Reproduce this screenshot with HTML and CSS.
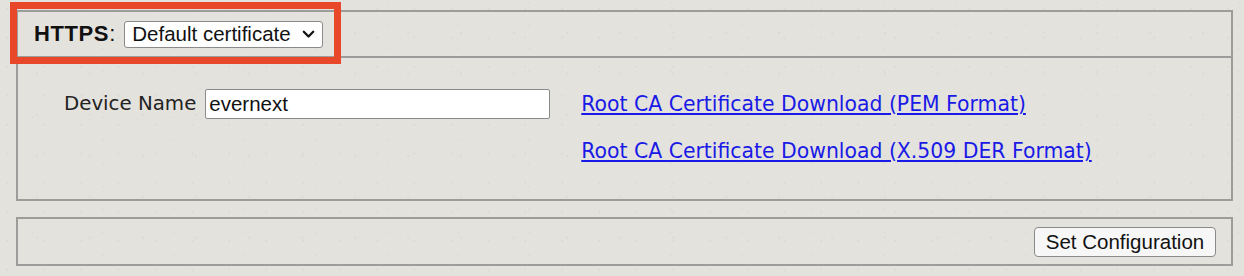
FILE: index.html
```html
<!DOCTYPE html>
<html>
<head>
<meta charset="utf-8">
<link rel="stylesheet" href="styles.css">
</head>
<body>
<div class="page">
  <div class="panel">
    <div class="panel-head">
      <span class="head-label">HTTPS</span><span class="colon">:</span>
      <span class="select">Default certificate<svg class="chev" width="13" height="9" viewBox="0 0 13 9"><path d="M1.8 1.8 L6.5 6.5 L11.2 1.8" fill="none" stroke="#111" stroke-width="2.3" stroke-linecap="round" stroke-linejoin="round"/></svg></span>
      <div class="annot"></div>
    </div>
    <div class="panel-body">
      <div class="row">
        <span class="label">Device Name</span>
        <span class="input">evernext</span>
        <div class="links">
          <a href="#" class="link">Root CA Certificate Download (PEM Format)</a>
          <a href="#" class="link">Root CA Certificate Download (X.509 DER Format)</a>
        </div>
      </div>
    </div>
  </div>
  <div class="panel actions">
    <button class="btn">Set Configuration</button>
  </div>
</div>
</body>
</html>
```
FILE: styles.css
```css
html, body {
  margin: 0;
  padding: 0;
}
body {
  background-color: #e4e2dd;
  background-image:
    radial-gradient(circle at 20% 30%, rgba(150,150,145,0.16) 0.6px, transparent 1.2px),
    radial-gradient(circle at 70% 80%, rgba(150,150,145,0.13) 0.6px, transparent 1.2px),
    radial-gradient(circle at 45% 10%, rgba(150,150,145,0.12) 0.5px, transparent 1px);
  background-size: 37px 29px, 53px 41px, 71px 23px;
  width: 1244px;
  height: 276px;
  overflow: hidden;
}
.page {
  padding: 10px 11px 0 16px;
  display: flex;
  flex-direction: column;
  gap: 16px;
}
.panel {
  border: 2px solid #9c9c9a;
}
.panel-head {
  position: relative;
  height: 44px;
  border-bottom: 2px solid #9c9c9a;
  display: flex;
  align-items: center;
  padding-left: 16px;
  font-family: "Liberation Sans", Arial, sans-serif;
}
.head-label {
  font-weight: bold;
  font-size: 22px;
  letter-spacing: 0.6px;
  color: #111;
}
.colon {
  font-size: 22px;
  color: #111;
  margin-right: 9px;
}
.select {
  display: flex;
  align-items: center;
  justify-content: space-between;
  box-sizing: border-box;
  width: 199px;
  height: 27px;
  padding: 0 7px 0 7px;
  background: #fff;
  border: 1px solid #8a8a8a;
  border-radius: 3px;
  font-size: 20.5px;
  color: #111;
}
.chev {
  margin-top: 1px;
}
.annot {
  position: absolute;
  left: -8px;
  top: -10px;
  width: 317px;
  height: 48px;
  border: 7px solid #e8472a;
}
.panel-body {
  height: 141px;
  padding: 31px 0 0 46px;
  box-sizing: border-box;
  font-family: "DejaVu Sans", Verdana, sans-serif;
}
.row {
  display: flex;
  align-items: flex-start;
}
.label {
  font-size: 19.8px;
  color: #222;
  line-height: 30px;
  margin-right: 9px;
}
.input {
  box-sizing: border-box;
  width: 345px;
  height: 30px;
  background: #fff;
  border: 1px solid #8a8a8a;
  border-radius: 2px;
  padding-left: 3px;
  font-size: 20.5px;
  line-height: 28px;
  color: #111;
  font-family: "Liberation Sans", Arial, sans-serif;
}
.links {
  margin-left: 31px;
  display: flex;
  flex-direction: column;
  gap: 17px;
}
.link {
  font-size: 20.4px;
  line-height: 30px;
  color: #1a1ae6;
  text-decoration: underline;
}
.actions {
  height: 49px;
  box-sizing: border-box;
  display: flex;
  align-items: center;
  justify-content: flex-end;
  padding-right: 15px;
}
.btn {
  width: 182px;
  height: 30px;
  background: #f7f7f7;
  border: 1px solid #8a8a8a;
  border-radius: 4px;
  font-family: "Liberation Sans", Arial, sans-serif;
  font-size: 20.5px;
  color: #111;
  padding: 0;
}
```
